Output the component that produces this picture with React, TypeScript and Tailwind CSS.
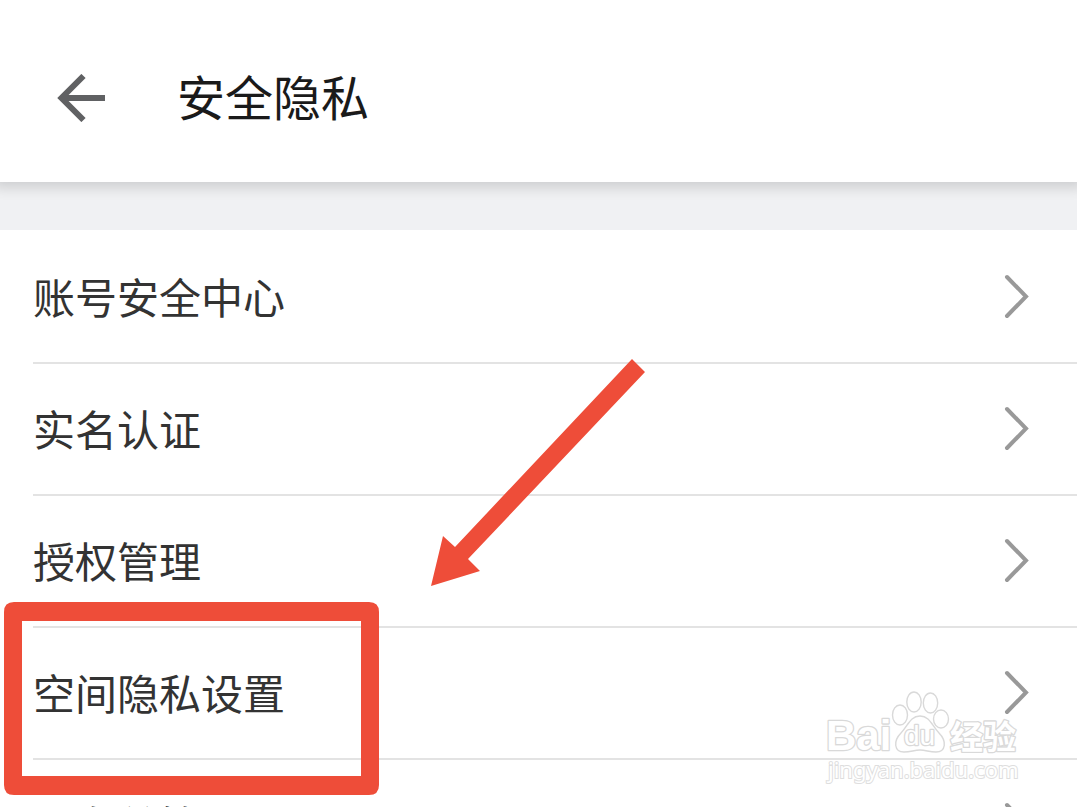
const items = ['账号安全中心', '实名认证', '授权管理', '空间隐私设置', '黑名单管理'];

function Chevron() {
  return (
    <svg className="h-12 w-7 shrink-0" viewBox="0 0 28 48" fill="none" stroke="#999999" strokeWidth="4" strokeLinecap="round" aria-hidden="true">
      <path d="M4 4 23 23.500 4 43" />
    </svg>
  );
}

function Watermark() {
  return (
    <svg className="pointer-events-none absolute right-14 top-[454px] h-28 w-52" viewBox="0 0 208 112" aria-hidden="true">
      <g fill="#ffffff" stroke="#d9d9d9" strokeWidth="1.4">
        <ellipse cx="87" cy="31" rx="7.5" ry="10" />
        <ellipse cx="101" cy="18" rx="7.2" ry="10" />
        <ellipse cx="117.5" cy="19" rx="7.2" ry="10" />
        <ellipse cx="128" cy="35" rx="7.5" ry="9" />
        <path d="M107 32c10 0 12 10 19 17 8 8 7 19-3 19-7 0-10-2-16-2s-9 2-16 2c-10 0-11-11-3-19 7-7 9-17 19-17Z" />
      </g>
      <g fill="#ffffff" stroke="#d9d9d9" strokeWidth="2.6" paintOrder="stroke" strokeLinejoin="round" fontFamily="'Liberation Sans', 'Noto Sans CJK SC', sans-serif" fontWeight="bold">
        <text x="13" y="66" fontSize="42">Bai</text>
        <text x="91" y="61" fontSize="28" fontWeight="normal">du</text>
        <text x="137" y="65" fontSize="33">经验</text>
      </g>
      <text x="15" y="94" fontSize="22" fill="#ffffff" stroke="#dedede" strokeWidth="2" paintOrder="stroke" fontFamily="'Noto Sans', sans-serif">jingyan.baidu.com</text>
    </svg>
  );
}

export default function App() {
  return (
    <div className="h-screen overflow-hidden bg-[#f0f1f3] font-['Noto_Sans_CJK_SC',sans-serif]">
      <header className="flex items-center gap-[72px] bg-white px-[57px] pb-12 pt-[62px] shadow-[0_0_12px_6px_rgba(0,0,0,0.14)]">
        <button type="button" aria-label="返回">
          <svg className="h-12 w-12" viewBox="0 0 48 48" fill="none" stroke="#606163" strokeWidth="6" aria-hidden="true">
            <path d="M49 24H5M26.500 2 4.500 24l22 22" />
          </svg>
        </button>
        <h1 className="pb-1.5 text-5xl leading-[66px] text-[#1a1a1a]">安全隐私</h1>
      </header>
      <main className="relative mt-12 bg-white pt-0.5">
        <ul className="pl-[33px]">
          {items.map((item) => (
            <li key={item} className="border-b-2 border-[#e3e3e3]">
              <a href="#" className="flex h-[130px] items-center justify-between pr-[46px] text-[42px] text-[#333333]">
                <span className="pb-1">{item}</span>
                <Chevron />
              </a>
            </li>
          ))}
        </ul>
        <svg className="pointer-events-none absolute left-1 top-[372px] h-[193px] w-[375px]" viewBox="0 0 375 193" fill="#ee4d39" aria-hidden="true">
          <path fillRule="evenodd" d="M10 0H365Q375 0 375 10V183Q375 193 365 193H10Q0 193 0 183V10Q0 0 10 0ZM18 19V174H357V19Z" />
        </svg>
        <svg className="pointer-events-none absolute left-[430px] top-[128px] h-[230px] w-[216px]" viewBox="0 0 216 230" fill="#ee4d39" aria-hidden="true">
          <path d="M202 1 215 14 38 201 50 213 1 228 13 178 25 189Z" />
        </svg>
        <Watermark />
      </main>
    </div>
  );
}
